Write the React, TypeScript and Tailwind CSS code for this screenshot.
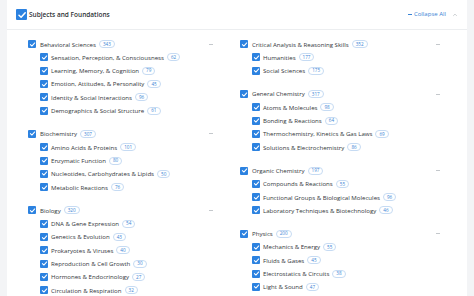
import React from 'react';

type Sub = { name: string; count: number };
type Group = { name: string; count: number; subs: Sub[] };

const leftGroups: Group[] = [
  {
    name: 'Behavioral Sciences',
    count: 343,
    subs: [
      { name: 'Sensation, Perception, & Consciousness', count: 62 },
      { name: 'Learning, Memory, & Cognition', count: 79 },
      { name: 'Emotion, Attitudes, & Personality', count: 45 },
      { name: 'Identity & Social Interactions', count: 96 },
      { name: 'Demographics & Social Structure', count: 61 },
    ],
  },
  {
    name: 'Biochemistry',
    count: 307,
    subs: [
      { name: 'Amino Acids & Proteins', count: 101 },
      { name: 'Enzymatic Function', count: 80 },
      { name: 'Nucleotides, Carbohydrates & Lipids', count: 50 },
      { name: 'Metabolic Reactions', count: 76 },
    ],
  },
  {
    name: 'Biology',
    count: 320,
    subs: [
      { name: 'DNA & Gene Expression', count: 54 },
      { name: 'Genetics & Evolution', count: 43 },
      { name: 'Prokaryotes & Viruses', count: 40 },
      { name: 'Reproduction & Cell Growth', count: 30 },
      { name: 'Hormones & Endocrinology', count: 27 },
      { name: 'Circulation & Respiration', count: 32 },
    ],
  },
];

const rightGroups: Group[] = [
  {
    name: 'Critical Analysis & Reasoning Skills',
    count: 352,
    subs: [
      { name: 'Humanities', count: 177 },
      { name: 'Social Sciences', count: 175 },
    ],
  },
  {
    name: 'General Chemistry',
    count: 317,
    subs: [
      { name: 'Atoms & Molecules', count: 98 },
      { name: 'Bonding & Reactions', count: 64 },
      { name: 'Thermochemistry, Kinetics & Gas Laws', count: 69 },
      { name: 'Solutions & Electrochemistry', count: 86 },
    ],
  },
  {
    name: 'Organic Chemistry',
    count: 197,
    subs: [
      { name: 'Compounds & Reactions', count: 55 },
      { name: 'Functional Groups & Biological Molecules', count: 96 },
      { name: 'Laboratory Techniques & Biotechnology', count: 46 },
    ],
  },
  {
    name: 'Physics',
    count: 200,
    subs: [
      { name: 'Mechanics & Energy', count: 55 },
      { name: 'Fluids & Gases', count: 45 },
      { name: 'Electrostatics & Circuits', count: 38 },
      { name: 'Light & Sound', count: 47 },
    ],
  },
];

function Check({ size = 8 }: { size?: number }) {
  return (
    <span
      className="flex shrink-0 items-center justify-center rounded-[1px] bg-[#2c82e0]"
      style={{ width: size, height: size }}
    >
      <svg viewBox="0 0 10 10" width={size - 1} height={size - 1}>
        <path d="M2 5.2 L4.1 7.2 L8.2 2.8" fill="none" stroke="white" strokeWidth="1.5" strokeLinecap="round" strokeLinejoin="round" />
      </svg>
    </span>
  );
}

function Badge({ n }: { n: number }) {
  return (
    <span className="ml-[3px] inline-flex h-[8px] items-center rounded-full border border-[#c6dbf3] px-[3px] text-[4.6px] leading-none text-[#3a84d5]">
      {n}
    </span>
  );
}

function GroupBlock({ group }: { group: Group }) {
  return (
    <div className="mb-[10px]">
      <div className="flex h-[13.3px] items-center pr-[27px]">
        <Check />
        <span className="ml-[4px] text-[6.1px] text-[#33373b]">{group.name}</span>
        <Badge n={group.count} />
        <span className="ml-auto h-px w-[4px] bg-[#c4c8cc]" />
      </div>
      {group.subs.map((s) => (
        <div key={s.name} className="flex h-[13.3px] items-center pl-[12px]">
          <Check />
          <span className="ml-[3px] text-[6.1px] text-[#33373b]">{s.name}</span>
          <Badge n={s.count} />
        </div>
      ))}
    </div>
  );
}

export default function App() {
  return (
    <div
      className="flex h-[296px] w-[474px] overflow-hidden bg-[#f3f4f6] px-[7px]"
      style={{ fontFamily: '"Open Sans", "Noto Sans", sans-serif' }}
    >
      <div className="flex w-full flex-col bg-white">
        <div className="flex h-[30px] shrink-0 items-center border-b border-[#eceef0] pl-[9px] pr-[9px]">
          <Check size={11} />
          <span className="ml-[2px] text-[6.5px] font-semibold text-[#2e3236]">Subjects and Foundations</span>
          <span className="ml-auto flex items-center text-[6px] text-[#3a84d5]">
            <span className="mr-[2px] h-px w-[4px] bg-[#3a84d5]" />
            Collapse All
          </span>
          <svg viewBox="0 0 10 10" width="6" height="6" className="ml-[6px]">
            <path d="M2 6.5 L5 3.5 L8 6.5" fill="none" stroke="#b8bdc2" strokeWidth="1.2" />
          </svg>
        </div>
        <div className="grid grid-cols-[212px_1fr] pl-[21px] pt-[7.5px]">
          <div>
            {leftGroups.map((g) => (
              <GroupBlock key={g.name} group={g} />
            ))}
          </div>
          <div>
            {rightGroups.map((g) => (
              <GroupBlock key={g.name} group={g} />
            ))}
          </div>
        </div>
      </div>
    </div>
  );
}
